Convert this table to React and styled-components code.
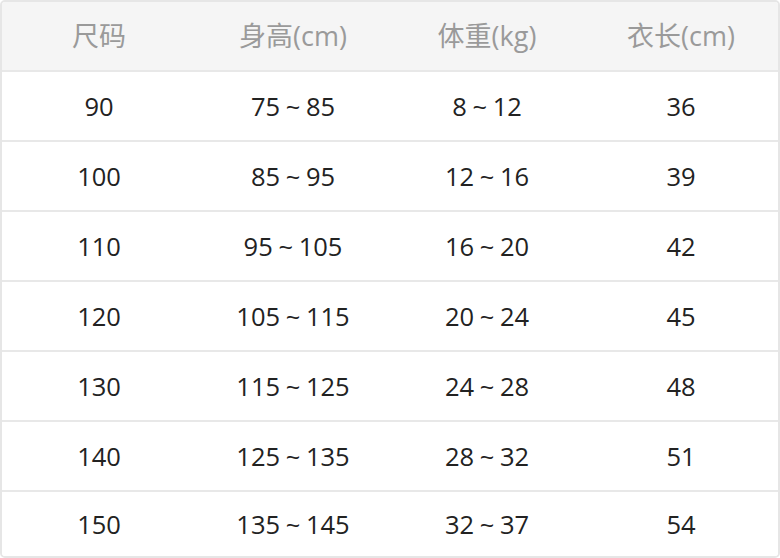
import React from 'react';
import styled, { createGlobalStyle } from 'styled-components';

const GlobalStyle = createGlobalStyle`
  html, body {
    margin: 0;
    padding: 0;
    background: #fff;
  }
  body {
    font-family: 'Open Sans', 'Noto Sans CJK SC', sans-serif;
  }
`;

const Table = styled.div`
  box-sizing: border-box;
  width: 780px;
  height: 558px;
  border: 2px solid #e6e6e6;
  border-radius: 5px;
  overflow: hidden;
  display: grid;
  grid-template-rows: 68px repeat(6, 70px) 1fr;
  background: #fff;
`;

const Row = styled.div`
  display: grid;
  grid-template-columns: repeat(4, 1fr);
  align-items: center;
  background: ${(p) => (p.$head ? '#f5f5f5' : '#fff')};
  border-top: ${(p) => (p.$head ? 'none' : '2px solid #e8e8e8')};
`;

const Cell = styled.div`
  text-align: center;
  font-size: ${(p) => (p.$head ? '27px' : '25.5px')};
  line-height: 1;
  color: ${(p) => (p.$head ? '#9a9a9a' : '#222')};
  padding-top: ${(p) => (p.$head ? '0' : '1px')};
  margin-top: ${(p) => (p.$head ? '-2px' : '0')};
`;

const Tilde = styled.span`
  margin: 0 -1px;
`;

const headers = ['尺码', '身高(cm)', '体重(kg)', '衣长(cm)'];

const rows = [
  ['90', '75~85', '8~12', '36'],
  ['100', '85~95', '12~16', '39'],
  ['110', '95~105', '16~20', '42'],
  ['120', '105~115', '20~24', '45'],
  ['130', '115~125', '24~28', '48'],
  ['140', '125~135', '28~32', '51'],
  ['150', '135~145', '32~37', '54'],
];

const renderValue = (v) => {
  if (!v.includes('~')) return v;
  const [a, b] = v.split('~');
  return (
    <>
      {a}
      <Tilde> ~ </Tilde>
      {b}
    </>
  );
};

const App = () => (
  <>
    <GlobalStyle />
    <Table>
      <Row $head>
        {headers.map((h) => (
          <Cell $head key={h}>{h}</Cell>
        ))}
      </Row>
      {rows.map((r) => (
        <Row key={r[0]}>
          {r.map((c, i) => (
            <Cell key={i}>{renderValue(c)}</Cell>
          ))}
        </Row>
      ))}
    </Table>
  </>
);

export default App;
